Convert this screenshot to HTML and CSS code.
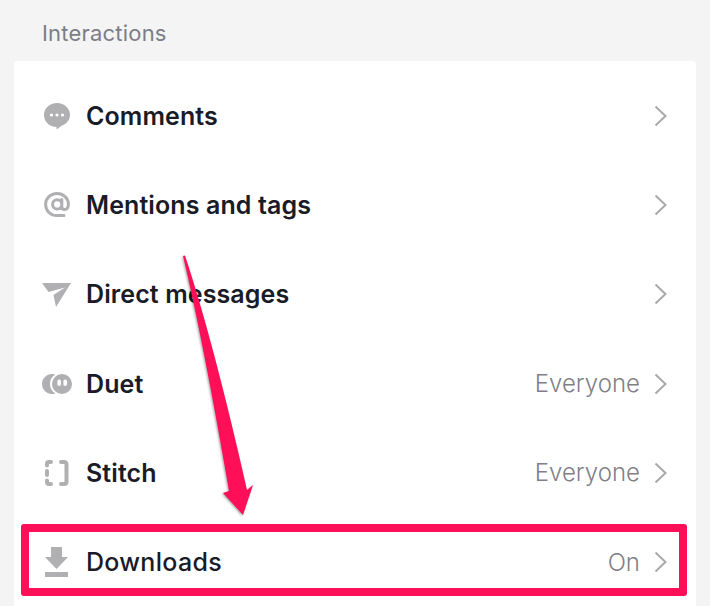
FILE: index.html
```html
<!DOCTYPE html>
<html lang="en">
<head>
  <meta charset="UTF-8">
  <meta name="viewport" content="width=device-width, initial-scale=1.0">
  <link rel="stylesheet" href="styles.css">
  <title>Interactions</title>
</head>
<body>
  <div class="screen">
    <h2 class="section-title">Interactions</h2>

    <div class="card">
      <div class="row">
        <svg class="icon" viewBox="0 0 30 30"><path class="fill" fill-rule="evenodd" d="M15 2C22.200 2 28 7.200 28 14C28 19.600 23.600 23.500 18.400 25.400L15.400 28C14.900 28.300 14.500 28 14.500 27.400V26C7.500 26 2 20.800 2 14C2 7.200 7.800 2 15 2ZM9.500 12.400a1.600 1.600 0 1 0 0 3.200a1.600 1.600 0 0 0 0-3.200ZM15 12.400a1.600 1.600 0 1 0 0 3.200a1.600 1.600 0 0 0 0-3.200ZM20.500 12.400a1.600 1.600 0 1 0 0 3.200a1.600 1.600 0 0 0 0-3.200Z"/></svg>
        <span class="label">Comments</span>
        <svg class="chevron" viewBox="0 0 13 22"><path d="M1.500 1.500L11.500 11L1.500 20.500"/></svg>
      </div>

      <div class="row">
        <svg class="icon" viewBox="0 0 30 30"><path class="line" d="M22 25.600H15C8.600 25.600 3.600 21 3.600 14.600C3.600 8.200 8.600 3.600 15 3.600C21.400 3.600 26.400 8 26.400 14.200C26.400 17.400 24.800 19.400 22.600 19.400C20.800 19.400 19.800 18.200 19.800 16.400V9.400M19.800 14.400C19.800 17 17.800 19 15.200 19C12.600 19 10.600 17 10.600 14.400C10.600 11.800 12.600 9.800 15.200 9.800C17.800 9.800 19.800 11.800 19.800 14.400Z"/></svg>
        <span class="label">Mentions and tags</span>
        <svg class="chevron" viewBox="0 0 13 22"><path d="M1.500 1.500L11.500 11L1.500 20.500"/></svg>
      </div>

      <div class="row">
        <svg class="icon" viewBox="0 0 30 30"><path class="fill" d="M0 4H29L14 28L11.500 16L23 8.500L6.500 13Z"/></svg>
        <span class="label">Direct messages</span>
        <svg class="chevron" viewBox="0 0 13 22"><path d="M1.500 1.500L11.500 11L1.500 20.500"/></svg>
      </div>

      <div class="row">
        <svg class="icon" viewBox="0 0 30 30"><path class="fill" fill-rule="evenodd" d="M20 5a10 10 0 1 1 0 20a10 10 0 0 1 0-20ZM17.200 10.500a1.800 1.800 0 0 0-1.800 1.800v3a1.800 1.800 0 0 0 3.600 0v-3a1.800 1.800 0 0 0-1.800-1.800ZM23.200 10.500a1.800 1.800 0 0 0-1.800 1.800v3a1.800 1.800 0 0 0 3.600 0v-3a1.800 1.800 0 0 0-1.800-1.800ZM10 5C11.200 5 12.400 5.200 13.400 5.600C10 7.400 8 10.800 8 15C8 19.200 10 22.600 13.400 24.400C12.400 24.800 11.200 25 10 25C4.500 25 0 20.500 0 15C0 9.500 4.500 5 10 5Z"/></svg>
        <span class="label">Duet</span>
        <span class="value">Everyone</span>
        <svg class="chevron" viewBox="0 0 13 22"><path d="M1.500 1.500L11.500 11L1.500 20.500"/></svg>
      </div>

      <div class="row">
        <svg class="icon" viewBox="0 0 30 30"><path class="stitch" d="M19 4H22C23.500 4 24.500 5 24.500 6.500V23.500C24.500 25 23.500 26 22 26H19"/><path class="stitch" d="M9 4H7C5.800 4 5 4.800 5 6V7.500M5 13V17M5 22.500V24C5 25.200 5.800 26 7 26H9"/></svg>
        <span class="label">Stitch</span>
        <span class="value">Everyone</span>
        <svg class="chevron" viewBox="0 0 13 22"><path d="M1.500 1.500L11.500 11L1.500 20.500"/></svg>
      </div>

      <div class="row row-plain">
        <svg class="icon" viewBox="0 0 30 30"><path class="fill" d="M9 0H20V10H26L14.500 22L3 10H9ZM3 25H26V30H3Z"/></svg>
        <span class="label">Downloads</span>
        <span class="value">On</span>
        <svg class="chevron" viewBox="0 0 13 22"><path d="M1.500 1.500L11.500 11L1.500 20.500"/></svg>
      </div>
    </div>

    <!-- annotation on top of the screenshot -->
    <div class="highlight"></div>
    <svg class="arrow" viewBox="0 0 710 606"><path d="M183 256L185 255.500Q213 340 247 490L253 485L243 515L223 493L229 491Q203 340 183 256Z"/></svg>
  </div>
</body>
</html>
```

FILE: styles.css
```css
html, body {
  margin: 0;
  background-color: #f4f4f4;
  font-family: Inter, "Open Sans", sans-serif;
}

.screen {
  position: relative;
  width: 710px;
  height: 606px;
  overflow: hidden;
}

.section-title {
  margin: 0;
  padding: 20px 0 0 42px;
  height: 61px;
  box-sizing: border-box;
  font-size: 22px;
  line-height: 26px;
  font-weight: 400;
  letter-spacing: 0.2px;
  color: #7c7d85;
}

.card {
  margin: 0 14px;
  padding-top: 10.5px;
  height: 545px;
  box-sizing: border-box;
  background-color: #fff;
  border-radius: 4px 4px 0 0;
}

.row {
  display: flex;
  align-items: center;
  height: 89.2px;
  padding: 0 29px 0 28px;
}

.icon {
  flex: none;
  width: 30px;
  height: 30px;
  margin-right: 14px;
}

.fill {
  fill: #b0b0b2;
}

.line, .stitch {
  fill: none;
  stroke: #b0b0b2;
  stroke-linecap: round;
  stroke-linejoin: round;
}

.line {
  stroke-width: 3px;
}

.stitch {
  stroke-width: 4px;
}

.label {
  flex: 1;
  font-size: 25px;
  font-weight: 600;
  letter-spacing: 0.1px;
  color: #191b26;
}

.row-plain .label {
  font-weight: 500;
  letter-spacing: 0.3px;
}

.value {
  margin-right: 14px;
  font-size: 24px;
  font-weight: 300;
  color: #7f8087;
}

.chevron {
  flex: none;
  width: 13px;
  height: 22px;
  fill: none;
  stroke: #a9a9ac;
  stroke-width: 2px;
}

.highlight {
  position: absolute;
  left: 21px;
  top: 524px;
  width: 666px;
  height: 72px;
  box-sizing: border-box;
  border: 8px solid #ff0f57;
  border-radius: 3px;
}

.arrow {
  position: absolute;
  left: 0;
  top: 0;
  width: 710px;
  height: 606px;
  fill: #ff0f57;
  filter: drop-shadow(-1px 1px 1px rgba(0, 0, 0, 0.35));
}
```
